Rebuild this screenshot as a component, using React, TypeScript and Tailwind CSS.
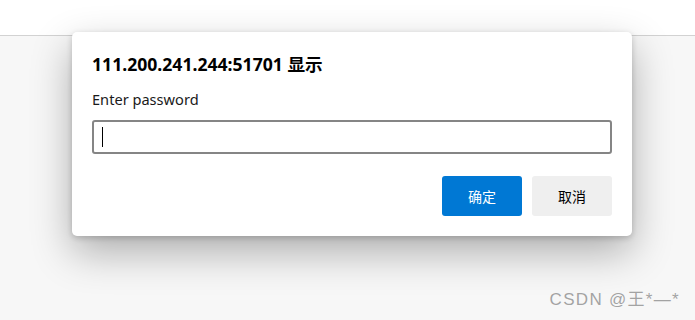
export default function App() {
  return (
    <div
      className="relative h-[320px] w-[695px] overflow-hidden bg-[#f7f7f7]"
      style={{ fontFamily: '"Noto Sans", "Noto Sans CJK SC", sans-serif' }}
    >
      <div className="h-[36px] border-b border-[#d2d2d2] bg-white" />

      {/* dialog */}
      <div className="absolute left-[72px] top-[32px] w-[560px] rounded-[5px] bg-white px-[20px] pt-[18px] pb-[20px] shadow-[0_16px_40px_rgba(0,0,0,0.3),0_2px_6px_rgba(0,0,0,0.18)]">
        <h1 className="text-[17.6px] leading-[28px] font-bold text-black">
          111.200.241.244:51701 显示
        </h1>
        <p className="mt-[11px] text-[14.6px] leading-[20px] text-[#1a1a1a]">Enter password</p>
        <div className="mt-[11px] flex h-[34px] items-center rounded-[3px] border-2 border-[#858585] px-[8px]">
          <span className="h-[20px] w-px bg-black" />
        </div>
        <div className="mt-[22px] flex justify-end gap-[10px]">
          <button
            type="button"
            className="h-[40px] w-[80px] rounded-[3px] bg-[#0078d4] text-[14px] text-white"
          >
            确定
          </button>
          <button
            type="button"
            className="h-[40px] w-[80px] rounded-[3px] bg-[#efefef] text-[14px] text-black"
          >
            取消
          </button>
        </div>
      </div>

      <div
        className="absolute right-[15px] top-[288px] text-[17px] leading-[24px] tracking-[1.3px] text-[#a3a3a3] [text-shadow:0_0_1px_#ffffff]"
        style={{ fontFamily: '"Liberation Sans", "Noto Sans CJK SC", sans-serif' }}
      >
        CSDN @王*—*
      </div>
    </div>
  );
}
